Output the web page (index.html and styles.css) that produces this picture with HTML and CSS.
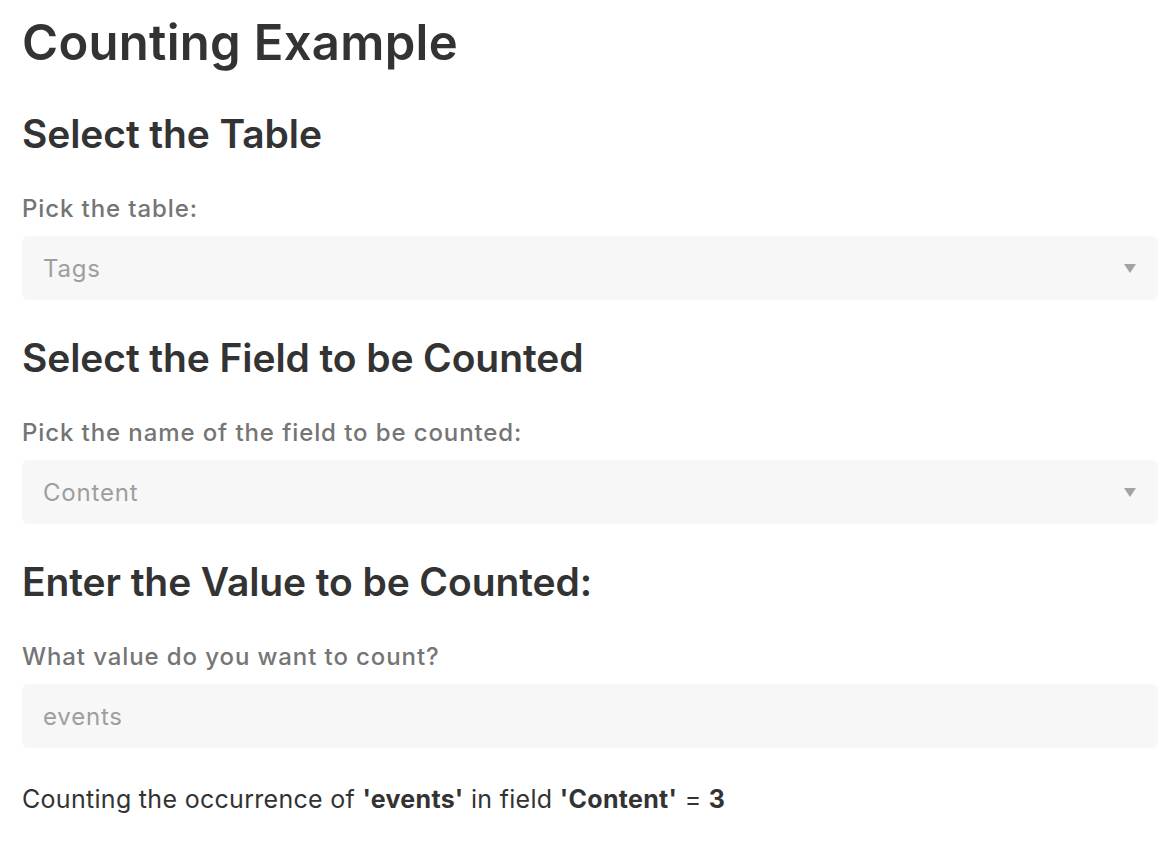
FILE: index.html
```html
<!DOCTYPE html>
<html>
<head>
<meta charset="utf-8">
<link rel="stylesheet" href="styles.css">
</head>
<body>
<main class="page">
  <h1 class="title">Counting Example</h1>

  <section class="section">
    <h2 class="heading">Select the Table</h2>
    <label class="label">Pick the table:</label>
    <div class="control select">
      <span class="value">Tags</span>
      <svg class="caret" width="12" height="9" viewBox="0 0 12 9"><path d="M0 0 H12 L6 9 Z" fill="#a3a3a3"/></svg>
    </div>
  </section>

  <section class="section">
    <h2 class="heading">Select the Field to be Counted</h2>
    <label class="label">Pick the name of the field to be counted:</label>
    <div class="control select">
      <span class="value">Content</span>
      <svg class="caret" width="12" height="9" viewBox="0 0 12 9"><path d="M0 0 H12 L6 9 Z" fill="#a3a3a3"/></svg>
    </div>
  </section>

  <section class="section">
    <h2 class="heading">Enter the Value to be Counted:</h2>
    <label class="label">What value do you want to count?</label>
    <div class="control">
      <span class="value">events</span>
    </div>
  </section>

  <p class="result">Counting the occurrence of <b>'events'</b> in field <b>'Content'</b> = <b>3</b></p>
</main>
</body>
</html>
```

FILE: styles.css
```css
* { box-sizing: border-box; }
html, body { margin: 0; padding: 0; background: #fff; }
body {
  font-family: Inter, "Noto Sans", "Liberation Sans", sans-serif;
  color: #333;
}
.page {
  padding: 13px 18px 0 22px;
  display: flex;
  flex-direction: column;
}
.title {
  margin: 0;
  font-size: 49px;
  font-weight: 570;
  line-height: 60px;
  letter-spacing: 0.3px;
  color: #333;
}
.section {
  display: flex;
  flex-direction: column;
}
.heading {
  margin: 34px 0 0 0;
  font-size: 39px;
  font-weight: 570;
  line-height: 48px;
  letter-spacing: -0.1px;
  color: #333;
}
.title + .section .heading { margin-top: 37px; }
.label {
  margin-top: 36px;
  font-size: 24px;
  font-weight: 500;
  line-height: 30px;
  letter-spacing: 0.9px;
  color: #757575;
}
.control {
  margin-top: 12px;
  height: 64px;
  border-radius: 6px;
  background: #f7f7f7;
  display: flex;
  align-items: center;
  justify-content: space-between;
  padding: 0 21px 0 21px;
}
.value {
  font-size: 24px;
  letter-spacing: 0.8px;
  color: #9e9e9e;
}
.caret { display: block; margin-right: 1px; }
.result {
  margin: 36px 0 0 0;
  font-size: 25px;
  line-height: 30px;
  letter-spacing: 0.3px;
  color: #333;
}
.result b { font-weight: 700; }
```
